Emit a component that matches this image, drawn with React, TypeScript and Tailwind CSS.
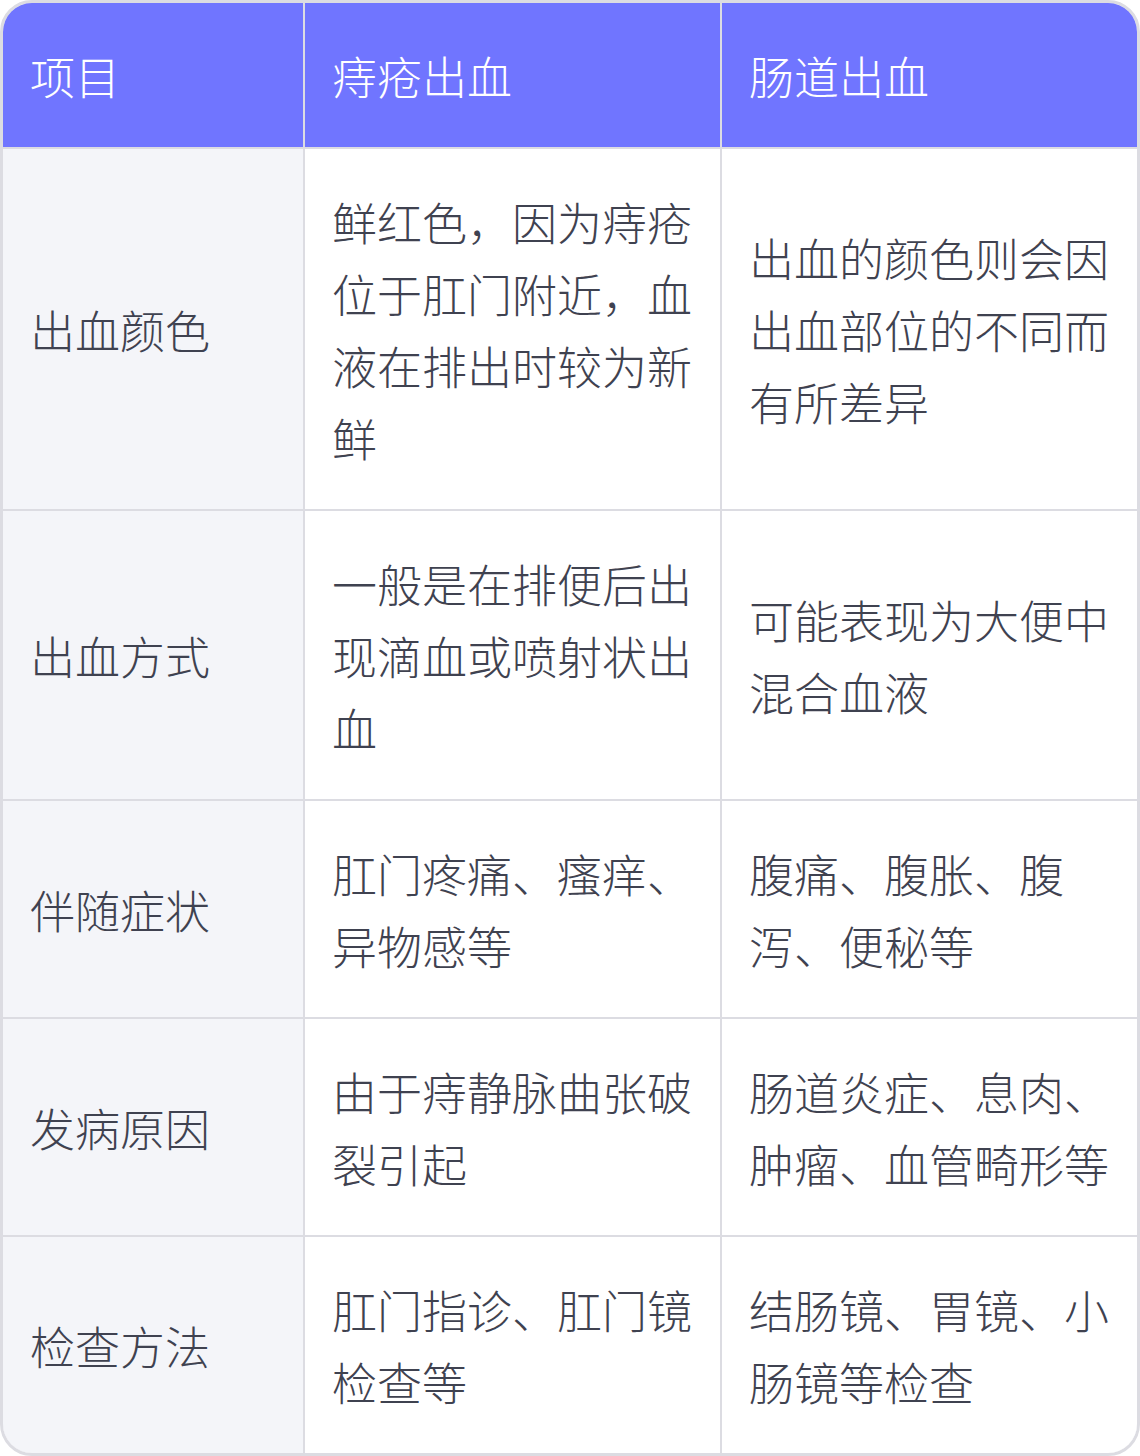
const HEAD = ["项目", "痔疮出血", "肠道出血"];

const ROWS: [string, string, string][] = [
  ["出血颜色", "鲜红色，因为痔疮位于肛门附近，血液在排出时较为新鲜", "出血的颜色则会因出血部位的不同而有所差异"],
  ["出血方式", "一般是在排便后出现滴血或喷射状出血", "可能表现为大便中混合血液"],
  ["伴随症状", "肛门疼痛、瘙痒、异物感等", "腹痛、腹胀、腹泻、便秘等"],
  ["发病原因", "由于痔静脉曲张破裂引起", "肠道炎症、息肉、肿瘤、血管畸形等"],
  ["检查方法", "肛门指诊、肛门镜检查等", "结肠镜、胃镜、小肠镜等检查"],
];

export default function App() {
  return (
    <div
      className="w-[1140px] bg-white font-light"
      style={{ fontFamily: '"Noto Sans CJK SC", "Noto Sans", sans-serif' }}
    >
      <div className="overflow-hidden rounded-[32px] border-[3px] border-[#dcdce2]">
        <div className="grid grid-cols-[300px_415px_415px] gap-[2px] bg-[#dcdce2] text-[45px] leading-[72px]">
          {HEAD.map((h) => (
            <div key={h} className="flex items-center bg-[#7075ff] px-[27px] pt-[37px] pb-[35px] text-white">
              {h}
            </div>
          ))}
          {ROWS.map(([a, b, c]) => (
            <div key={a} className="contents">
              <div className="flex items-center bg-[#f4f5f9] px-[27px] pt-[37px] pb-[35px] text-[#3f4250]">{a}</div>
              <div className="flex items-center bg-white px-[27px] pt-[37px] pb-[35px] text-[#3f4250]">{b}</div>
              <div className="flex items-center bg-white px-[27px] pt-[37px] pb-[35px] text-[#3f4250]">{c}</div>
            </div>
          ))}
        </div>
      </div>
    </div>
  );
}
